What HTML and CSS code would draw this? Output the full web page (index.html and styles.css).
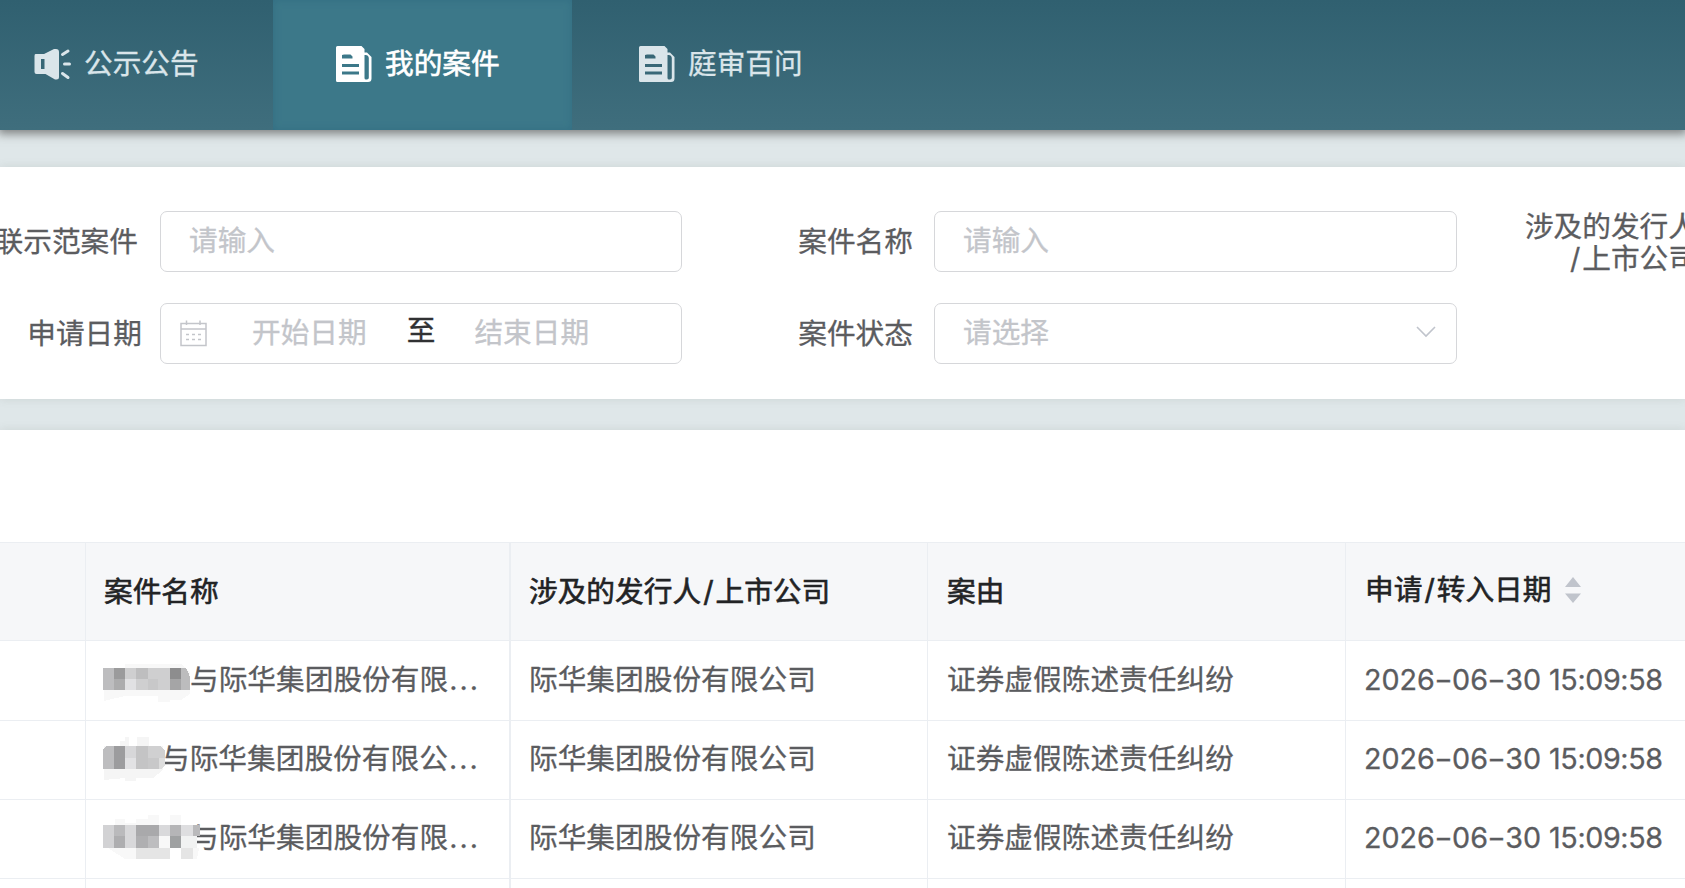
FILE: index.html
```html
<!DOCTYPE html>
<html lang="zh-CN">
<head>
<meta charset="utf-8">
<title>我的案件</title>
<link rel="stylesheet" href="styles.css">
</head>
<body>
<svg width="0" height="0" class="defs">
  <symbol id="doc" viewBox="0 0 36 36">
    <path fill="currentColor" fill-rule="evenodd" d="M1.500 0H25.500L28.500 3V6.500H31L35.500 11V32.500Q35.500 36 32 36H1.500Q0 36 0 34.500V1.500Q0 0 1.500 0ZM6 9V12.500H16.500V10.500L14.500 8.500H8ZM6 18V21H23V18ZM6 25.500V28.500H23V25.500ZM28.500 9V32Q28.500 33.500 30 33.500H31Q32.800 33.500 32.800 31.800V12Q32.500 9.200 29.500 9Z"/>
  </symbol>
</svg>
<header class="nav">
  <a class="tab tab-notice">
    <svg class="icon" width="37" height="36" viewBox="0 0 37 36"><path fill="currentColor" fill-rule="evenodd" d="M1.500 8H10L20 3H22Q25 3 25 6V31Q25 33.500 22.500 33.500H21L11.500 28H2.500Q0.500 28 0.500 26V10Q0.500 8 1.500 8ZM7 13V23H10.500V13Z"/><path stroke="currentColor" stroke-width="3" stroke-linecap="round" fill="none" d="M28.500 8.500L34 5M30.500 18H35.500M28.500 27.500L34 31.500"/></svg>
    <span>公示公告</span>
  </a>
  <a class="tab tab-cases active"><svg class="icon" width="36" height="36"><use href="#doc"/></svg><span>我的案件</span></a>
  <a class="tab tab-faq"><svg class="icon" width="36" height="36"><use href="#doc"/></svg><span>庭审百问</span></a>
</header>
<section class="filters">
  <label class="label label-linked">联示范案件</label>
  <div class="field">请输入</div>
  <label class="label">案件名称</label>
  <div class="field">请输入</div>
  <label class="label label-issuer">涉及的发行人<br><span class="slash">/</span>上市公司</label>
  <label class="label label-date">申请日期</label>
  <div class="field range">
    <svg class="calendar" width="27" height="27" viewBox="0 0 27 27" fill="none" stroke="#c3c5ca" stroke-width="1.500"><path d="M1 3.500H26V25.500H1ZM1 9H26M6.500 0.500V5M20 0.500V5"/><path stroke-dasharray="3 3" d="M6 14.500H21M6 19.500H21"/></svg>
    <span class="start">开始日期</span><span class="to">至</span><span>结束日期</span>
  </div>
  <label class="label label-status">案件状态</label>
  <div class="field select">请选择
    <svg width="20" height="12" viewBox="0 0 20 12" fill="none" stroke="#c0c4cc" stroke-width="1.600"><path d="M1 1L10 10L19 1"/></svg>
  </div>
</section>
<main class="list">
  <div class="table">
    <div class="row head"><div></div><div>案件名称</div><div><span>涉及的发行人<span class="slash">/</span>上市公司</span></div><div>案由</div>
      <div class="sortable"><span>申请<span class="slash">/</span>转入日期</span><svg width="16" height="26" viewBox="0 0 16 26" fill="#c0c4cc"><path d="M8 0L16 10H0ZM8 26L0 16.500H16Z"/></svg></div></div>
    <div class="row"><div></div>
      <div class="name"><span class="mask"><svg width="102" height="44" viewBox="0 0 102 44" shape-rendering="crispEdges"><path fill="#f8f8f8" d="M1 6H22V2H78L87 10V32L78 38H67V40H55V34H22L1 39Z"/><path fill="#bdbdbf" d="M0 6H11V28H0Z"/><path fill="#9b9b9c" d="M11 6H22V17H11Z"/><path fill="#acacad" d="M11 17H22V28H11Z"/><path fill="#cfcfd0" d="M22 6H67V28H22Z"/><path fill="#e1e1e3" d="M22 17H33V28H22Z"/><path fill="#bebebf" d="M33 6H45V17H33Z"/><path fill="#c8c8c9" d="M45 17H55V28H45Z"/><path fill="#8d8d8e" d="M67 6H78V17H67Z"/><path fill="#a5a5a6" d="M67 17H78V28H67Z"/><path fill="#bcbcbd" d="M78 6H83Q87 12 87 17V28H78Z"/></svg></span>与际华集团股份有限<span class="dots">...</span></div>
      <div>际华集团股份有限公司</div><div>证券虚假陈述责任纠纷</div><div class="date"><span>2026<span class="dash">-</span>06<span class="dash">-</span>30 <span class="time">15:09:58</span></span></div></div>
    <div class="row"><div></div>
      <div class="name"><span class="mask short"><svg width="102" height="44" viewBox="0 0 102 44" shape-rendering="crispEdges"><path fill="#f5f5f5" d="M17 0H22V-4H26V5H34V-4H46V5H60V29L50 37H33V40H22V37L1 39V5H17Z"/><path fill="#bdbdbf" d="M3 5H11V28H0V8Z"/><path fill="#9c9c9e" d="M11 5H22V28H11Z"/><path fill="#d7d7d9" d="M22 5H33V17H22Z"/><path fill="#e2e2e4" d="M22 17H33V28H22Z"/><path fill="#c4c4c5" d="M33 5H45V28H33Z"/><path fill="#d0d0d1" d="M45 5H58L62 10V17H45Z"/><path fill="#c8c8c9" d="M45 17H56V28H45Z"/><path fill="#ddd" d="M56 17H62V24L59 28H56Z"/></svg></span>与际华集团股份有限公<span class="dots">...</span></div>
      <div>际华集团股份有限公司</div><div>证券虚假陈述责任纠纷</div><div class="date"><span>2026<span class="dash">-</span>06<span class="dash">-</span>30 <span class="time">15:09:58</span></span></div></div>
    <div class="row"><div></div>
      <div class="name"><span class="mask"><svg width="102" height="44" viewBox="0 0 102 44" shape-rendering="crispEdges"><path fill="#f8f8f8" d="M12 6V-1H22V3H33V-1H45V-5H56V6H67V-5H78V6H88V28H96L94 39H78V28H67V39H22L5 28Z"/><path fill="#d2d2d4" d="M0 5H11V28H0Z"/><path fill="#bababc" d="M11 5H22V16H11Z"/><path fill="#aeaeb0" d="M11 16H22V28H11Z"/><path fill="#d8d8da" d="M22 5H33V28H22Z"/><path fill="#a9a9ab" d="M33 5H56V16H33Z"/><path fill="#afafb1" d="M33 16H45V28H33Z"/><path fill="#bdbdbf" d="M45 16H56V28H45Z"/><path fill="#d9d9db" d="M56 5H67V16H56Z"/><path fill="#b5b5b7" d="M67 5H78V16H67Z"/><path fill="#9fa1a2" d="M67 16H78V28H67Z"/><path fill="#dedee0" d="M78 5H90V16H78Z"/><path fill="#f1f2f2" d="M78 16H94V28H78Z"/><path fill="#b9b9bb" d="M90 5H97V16H90Z"/><path fill="#e5e5e5" d="M33 28H67V39H33ZM78 28H90V39H78Z"/></svg></span>与际华集团股份有限<span class="dots">...</span></div>
      <div>际华集团股份有限公司</div><div>证券虚假陈述责任纠纷</div><div class="date"><span>2026<span class="dash">-</span>06<span class="dash">-</span>30 <span class="time">15:09:58</span></span></div></div>
    <div class="row tail"><div></div><div></div><div></div><div></div><div></div></div>
  </div>
</main>
</body>
</html>
```
FILE: styles.css
```css
* { box-sizing: border-box; }
body {
  margin: 0;
  width: 1685px;
  height: 888px;
  overflow: hidden;
  background: #dfe7e9;
  color: #5b5c5f;
  font: 28.7px/32px Inter, "Noto Sans CJK SC", sans-serif;
  white-space: nowrap;
  -webkit-text-stroke: .3px;
}
.defs { position: absolute; }
svg { display: block; flex: none; overflow: visible; }
.nav {
  position: relative;
  display: flex;
  height: 130px;
  background: linear-gradient(#306070, #3f6e7d);
  box-shadow: 0 2px 9px 2px rgba(70, 70, 70, .62);
  color: #dae5ea;
}
.tab { display: flex; align-items: center; padding-bottom: 2px; gap: 13px; }
.tab-notice { width: 273px; padding-left: 34px; }
.tab-cases { width: 299px; padding-left: 63px; }
.tab-faq { padding-left: 67px; }
.tab.active {
  background: #3c7889;
  box-shadow: inset 0 0 7px #336e83;
  color: #fff;
  -webkit-text-stroke: .6px;
}
.filters {
  display: grid;
  grid-template-columns: 160px 522px 252px 523px 241px;
  grid-template-rows: 61px 61px;
  row-gap: 31px;
  height: 232px;
  margin-top: 37px;
  padding-top: 44px;
  background: #fff;
  box-shadow: 0 0 9px rgba(90, 100, 90, .14);
}
.label { align-self: center; text-align: right; padding-right: 21px; }
.label-linked { justify-self: end; padding-right: 22px; }
.label-date { grid-column: 1; padding-right: 18px; }
.label-date, .label-status { padding-top: 1px; }
.label-issuer { padding-right: 1px; padding-top: 2px; }
.slash { margin: 0 2px; }
.field {
  display: flex;
  align-items: center;
  border: 1.500px solid #d6d7da;
  border-radius: 7px;
  padding: 0 20px 1px 28px;
  color: #c3c5ca;
}
.range { padding-left: 19px; }
.start { margin-left: 45px; }
.to { margin: -4px 39px 0 40px; color: #303133; }
.select { justify-content: space-between; }
.select svg { margin-top: -3px; }
.list {
  height: 458px;
  margin-top: 31px;
  padding-top: 112px;
  background: #fff;
  box-shadow: 0 0 9px rgba(90, 100, 90, .14);
}
.row {
  display: grid;
  grid-template-columns: 86px 425px 417px 418px 1fr;
  height: 79px;
  border-bottom: 1px solid #ebeef2;
}
.row > div {
  display: flex;
  align-items: center;
  border-right: 1px solid #ebeef2;
  padding-left: 18px;
  padding-bottom: 2px;
}
.row > div:nth-child(2) { border-right-width: 2px; }
.row > div:nth-child(4) { padding-left: 19px; }
.row > div:last-child { border-right: 0; }
.head {
  height: 99px;
  background: #f6f7f9;
  border-top: 1px solid #ebeef2;
  color: #222325;
  -webkit-text-stroke: .6px;
}
.row.head > div { padding-bottom: 0; }
.row:nth-child(2) { height: 80px; }
.row.tail { height: 9px; border-bottom: 0; }
.row.head > .sortable { gap: 14px; padding-bottom: 3px; padding-left: 19px; }
.row > .name { padding-left: 17px; }
.mask { width: 87px; height: 44px; position: relative; z-index: 1; }
.mask svg { margin-top: 4px; }
.mask.short { width: 58px; }
.dots { letter-spacing: 2px; margin-left: 1px; }
.dash { display: inline-block; transform: scaleX(1.400); margin: 0 2px; }
.time { letter-spacing: -.4px; }
```
